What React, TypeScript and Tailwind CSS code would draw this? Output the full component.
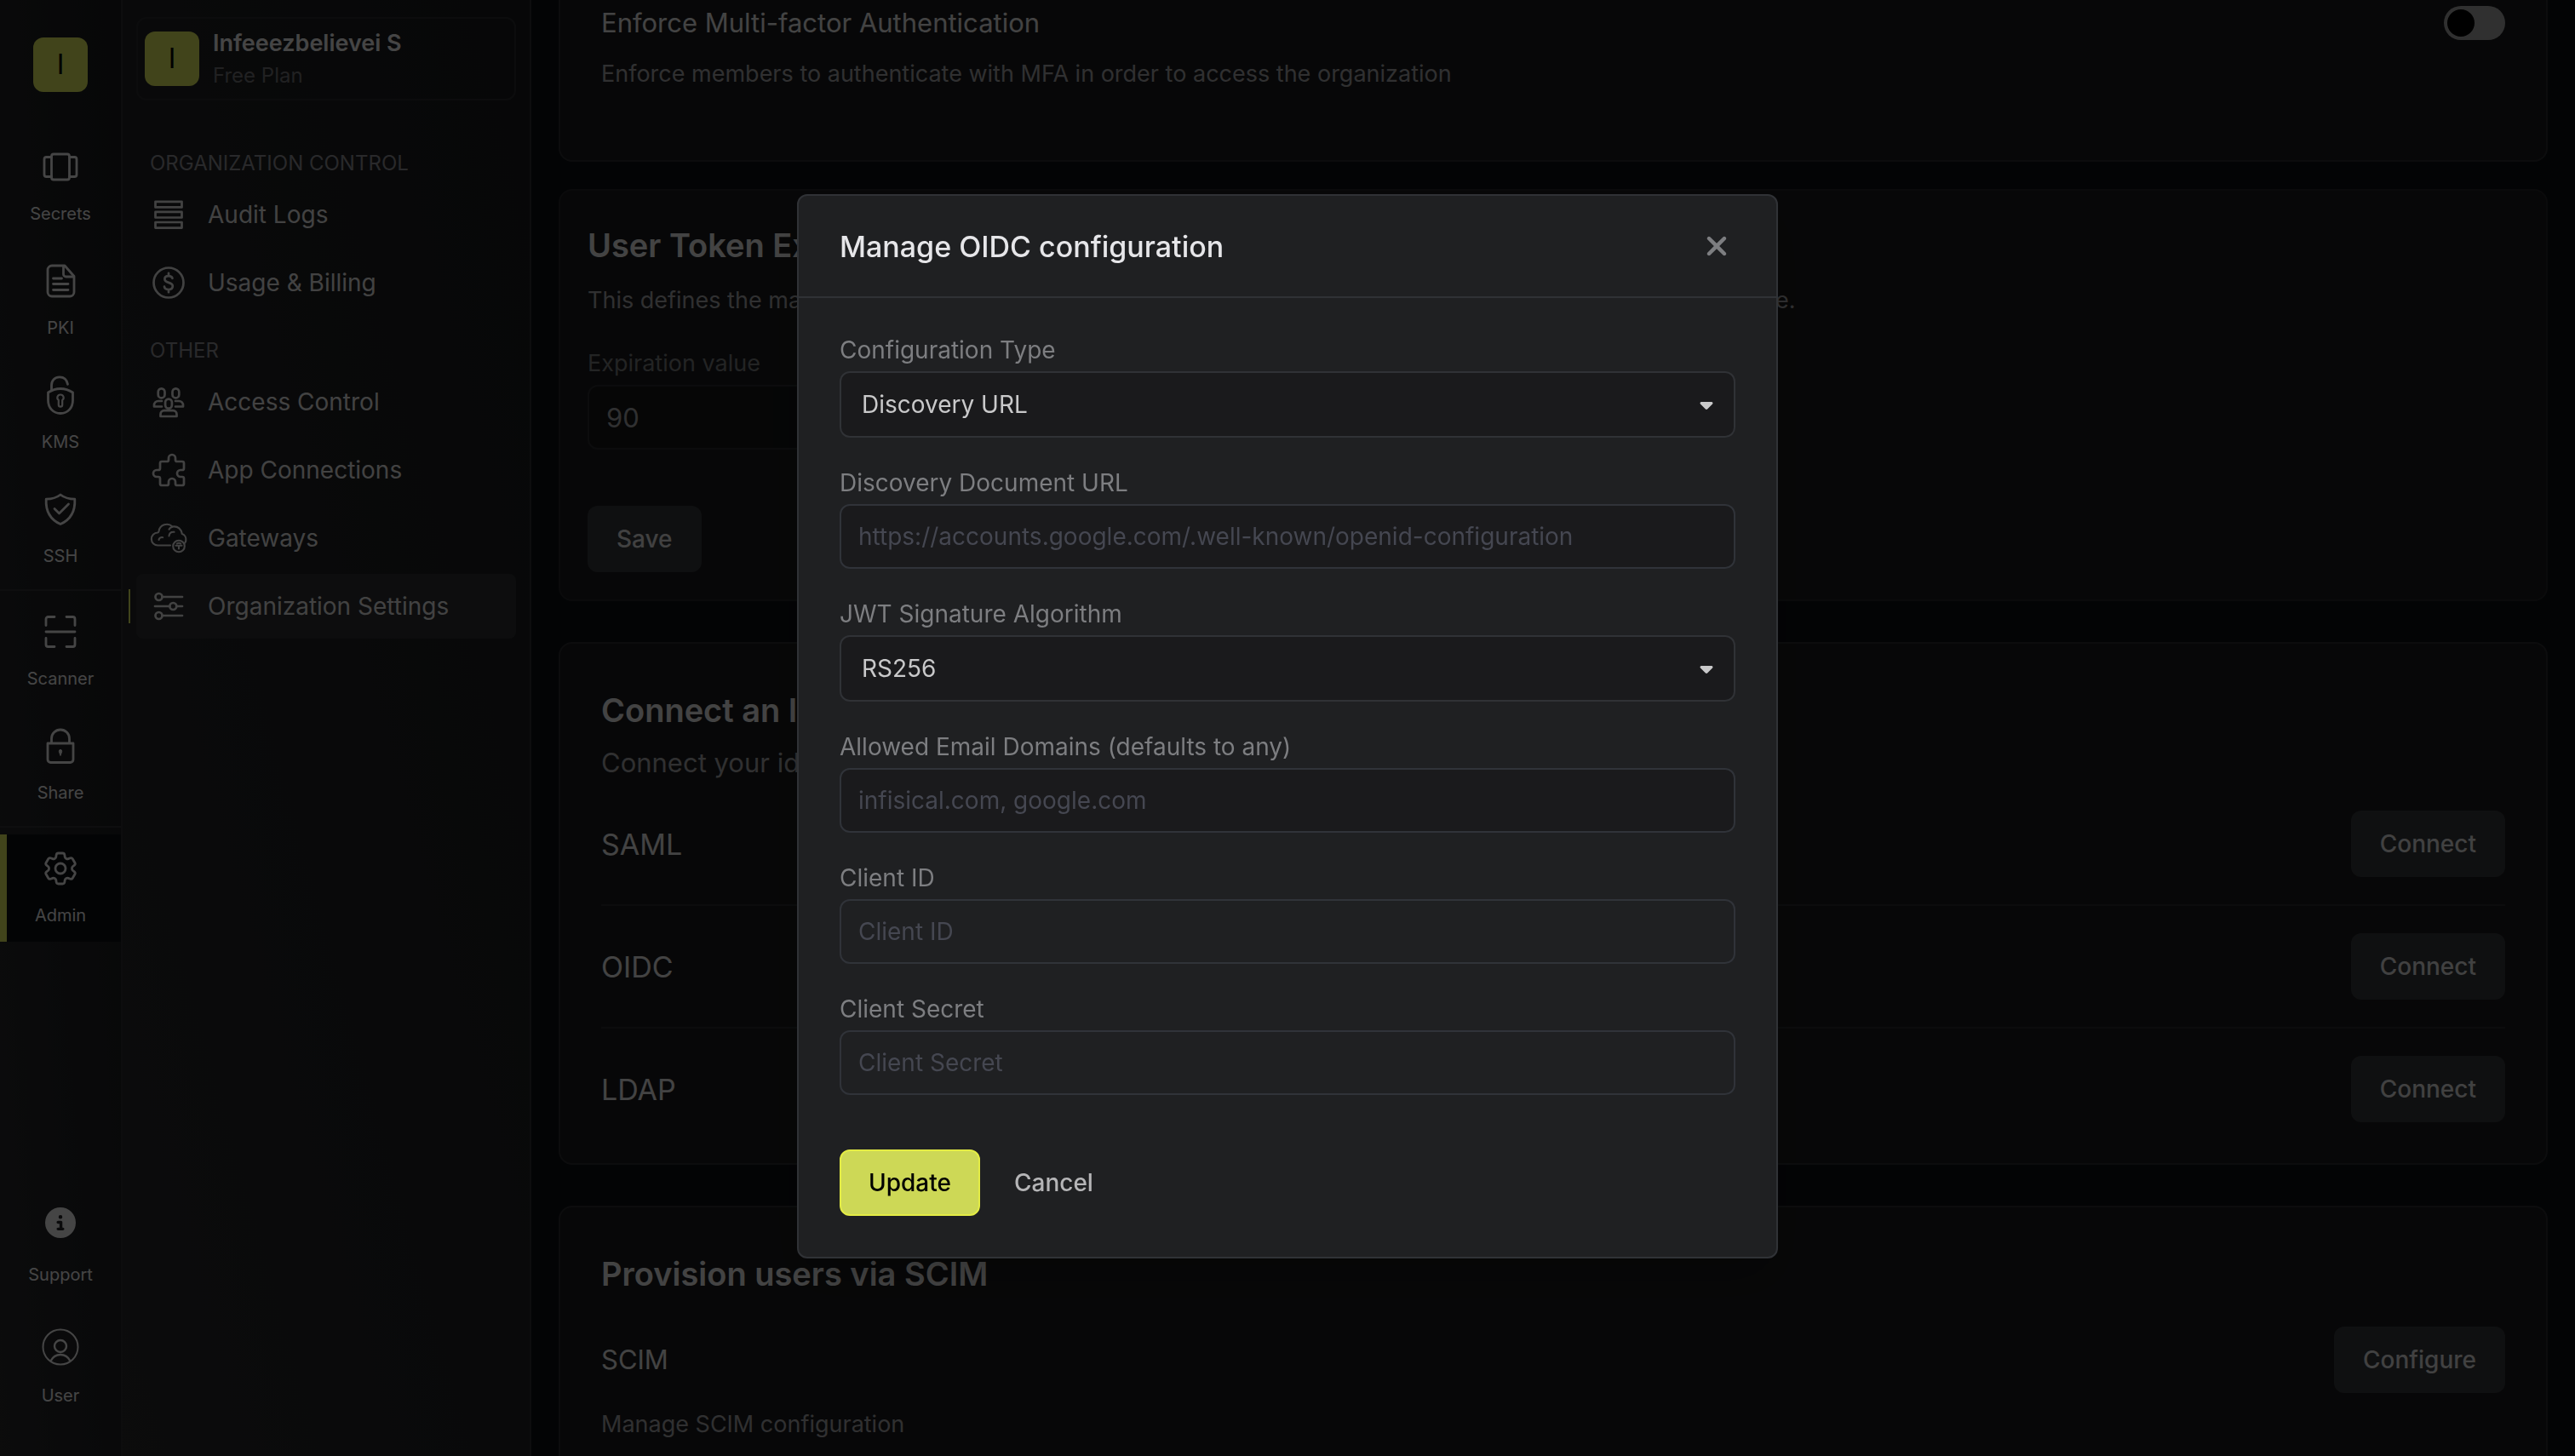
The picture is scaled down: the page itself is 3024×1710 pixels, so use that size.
import React, { useState } from "react";
import { FaCaretDown, FaCircleInfo, FaXmark } from "react-icons/fa6";
import { HiOutlineCog6Tooth } from "react-icons/hi2";

type IconProps = { children: React.ReactNode };

function RailIcon({ children }: IconProps) {
  return (
    <svg
      viewBox="0 0 48 48"
      className="size-12"
      fill="none"
      stroke="currentColor"
      strokeWidth="2.8"
      strokeLinecap="round"
      strokeLinejoin="round"
      aria-hidden="true"
    >
      {children}
    </svg>
  );
}

function MenuIcon({ children }: IconProps) {
  return (
    <svg
      viewBox="0 0 40 40"
      className="size-10 overflow-visible"
      fill="none"
      stroke="currentColor"
      strokeWidth="2.7"
      strokeLinecap="round"
      strokeLinejoin="round"
      aria-hidden="true"
    >
      {children}
    </svg>
  );
}

const products = [
  {
    name: "Secrets",
    icon: (
      <RailIcon>
        <rect x="13.5" y="9" width="21" height="30" rx="2.5" />
        <path d="M13.5 12.5h-6A2.5 2.5 0 0 0 5 15v18a2.5 2.5 0 0 0 2.5 2.5h6M34.5 12.5h6A2.5 2.5 0 0 1 43 15v18a2.5 2.5 0 0 1-2.5 2.5h-6" />
      </RailIcon>
    ),
  },
  {
    name: "PKI",
    icon: (
      <RailIcon>
        <path d="M29 6H14a5 5 0 0 0-5 5v26a5 5 0 0 0 5 5h21a5 5 0 0 0 5-5V18.5z" />
        <path d="M27.5 6.5V16a3 3 0 0 0 3 3h9M15.5 21h10M15.5 27.5H33M15.5 34.5H33" />
      </RailIcon>
    ),
  },
  {
    name: "KMS",
    icon: (
      <RailIcon>
        <path d="M24 16.5c-5 0-10 1.500-14.500 4.500v9c0 9 6 15.500 14.500 15.500S38.500 39 38.500 30v-9C34 18 29 16.500 24 16.500z" />
        <path d="M13.5 18v-5.500c0-6 4-9.700 9.500-9.700 5 0 8.500 3 9.500 8.500" />
        <path d="M24 23.5a3.600 3.600 0 0 0-2.200 6.500v5.500a2.200 2.200 0 0 0 4.400 0V30A3.600 3.600 0 0 0 24 23.500z" strokeWidth="2.2" />
      </RailIcon>
    ),
  },
  {
    name: "SSH",
    icon: (
      <RailIcon>
        <path d="M24 7C19.500 10.500 13 12.200 7.200 12.200 6.500 26 11.500 36 24 41.500 36.500 36 41.500 26 40.800 12.200 35 12.200 28.500 10.500 24 7z" />
        <path d="M17 23.5l5.500 5.500L33.500 18" />
      </RailIcon>
    ),
  },
];

const tools = [
  {
    name: "Scanner",
    icon: (
      <RailIcon>
        <path d="M7 16.500V9a2.500 2.500 0 0 1 2.500-2.500H17M31 6.500h7.500A2.500 2.500 0 0 1 41 9v7.500M41 31.500V39a2.500 2.500 0 0 1-2.500 2.500H31M17 41.500H9.500A2.500 2.500 0 0 1 7 39v-7.500M7 24h34" />
      </RailIcon>
    ),
  },
  {
    name: "Share",
    icon: (
      <RailIcon>
        <path d="M9 21h30v19a3.500 3.500 0 0 1-3.500 3.500h-23A3.500 3.500 0 0 1 9 40zM13.500 21v-5.500a10.500 10.500 0 0 1 21 0V21" />
        <path d="M24 28.500a1.700 1.700 0 0 1 1.700 2L24 35.500l-1.700-5a1.700 1.700 0 0 1 1.700-2z" fill="currentColor" strokeWidth="1" />
      </RailIcon>
    ),
  },
];

const controlMenu = [
  {
    name: "Audit Logs",
    icon: (
      <MenuIcon>
        <path d="M4.500 4.800h31v6.600h-31zM4.500 16.900h31v6.600h-31zM4.500 29h31v6.600h-31z" />
      </MenuIcon>
    ),
  },
  {
    name: "Usage & Billing",
    icon: (
      <MenuIcon>
        <circle cx="20" cy="20" r="17.5" />
        <path d="M24.500 14.800c-.5-1.700-2.200-2.700-4.500-2.700-2.700 0-4.600 1.400-4.600 3.700 0 5.300 9.400 2.900 9.400 8.300 0 2.400-2 3.900-4.800 3.900-2.600 0-4.600-1.200-5-3.300M20 8.800v3M20 28.200v3" />
      </MenuIcon>
    ),
  },
];

const otherMenu = [
  {
    name: "Access Control",
    icon: (
      <MenuIcon>
        <rect x="7.7" y="4.3" width="7.8" height="11" rx="3.9" />
        <rect x="24.5" y="4.3" width="7.8" height="11" rx="3.9" />
        <rect x="16.1" y="16.6" width="7.8" height="11" rx="3.9" />
        <path d="M10.500 37h19v-2.500c0-2.500-1.800-4.300-4.300-4.300H14.800c-2.500 0-4.300 1.800-4.300 4.300z" />
        <path d="M12 19H8c-3 0-5 2-5 5v1.500h9M28 19h4c3 0 5 2 5 5v1.500h-9" />
      </MenuIcon>
    ),
  },
  {
    name: "App Connections",
    icon: (
      <svg
        viewBox="1 1 20 20"
        className="size-10"
        fill="none"
        stroke="currentColor"
        strokeWidth="1.35"
        strokeLinejoin="round"
        aria-hidden="true"
      >
        <path d="M11 4a2 2 0 114 0v1a1 1 0 001 1h3a1 1 0 011 1v3a1 1 0 01-1 1h-1a2 2 0 100 4h1a1 1 0 011 1v3a1 1 0 01-1 1h-3a1 1 0 01-1-1v-1a2 2 0 10-4 0v1a1 1 0 01-1 1H7a1 1 0 01-1-1v-3a1 1 0 00-1-1H4a2 2 0 110-4h1a1 1 0 001-1V7a1 1 0 011-1h3a1 1 0 001-1V4z" />
      </svg>
    ),
  },
  {
    name: "Gateways",
    icon: (
      <MenuIcon>
        <g strokeWidth="2.1">
          <path d="M22 28.500H7.500a7.500 7.500 0 0 1-.3-15 2 2 0 0 0 1.300-1.500 9.500 9.500 0 0 1 16-5.500c6.500-1 10.500 3 11.300 8.500 3.200 1 5 4.500 4.500 8-.2 1.500-.8 2.500-1.800 3.300" />
          <path d="M8.500 22c.3-2 2.300-3.400 4.700-2.800M20.500 17.500c.3-3.200 2.500-5 6-4.700M24.500 6.700c-2 .5-3.300 1.500-4 3" />
          <circle cx="32" cy="29.5" r="6.8" />
          <path d="M28.500 28.800h7M32 28.800v3.700M29.800 26.500c1.400-1 3-1 4.400 0" />
        </g>
      </MenuIcon>
    ),
  },
  {
    name: "Organization Settings",
    active: true,
    icon: (
      <MenuIcon>
        <circle cx="8.5" cy="9" r="4" />
        <circle cx="25.3" cy="20" r="4" />
        <circle cx="8.5" cy="31" r="4" />
        <path d="M12.500 9H36M4 20h17.300M29.300 20H36M12.500 31H36" />
      </MenuIcon>
    ),
  },
];

function RailItem({ name, icon }: { name: string; icon: React.ReactNode }) {
  return (
    <a href="#" className="flex flex-col items-center gap-4 py-4 text-[20px] leading-[30px] text-[#e6e6e6]">
      {icon}
      {name}
    </a>
  );
}

function MenuItem({ name, icon, active }: { name: string; icon: React.ReactNode; active?: boolean }) {
  return (
    <a
      href="#"
      className={`relative flex h-19 items-center gap-6 rounded-lg pl-4 text-[28px] text-[#dedede] ${
        active ? "bg-[#2d2e30]" : ""
      }`}
    >
      {active && <span className="absolute -left-[9px] h-10 w-[2px] bg-[#d9e35a]" />}
      <span className="flex w-11 justify-center">{icon}</span>
      {name}
    </a>
  );
}

function DarkButton({ children }: IconProps) {
  return (
    <button className="h-[78px] rounded-xl bg-[#34373a] px-[34px] text-[28px] font-medium text-[#dadada]">
      {children}
    </button>
  );
}

function FormField({ id, label, children }: { id: string; label: string; children: React.ReactNode }) {
  return (
    <div className="flex flex-col gap-1">
      <label htmlFor={id} className="text-[28px] leading-[42px] text-[#7d7e81]">
        {label}
      </label>
      {children}
    </div>
  );
}

function FormSelect({ id, label, options }: { id: string; label: string; options: string[] }) {
  return (
    <FormField id={id} label={label}>
      <div className="relative flex items-center">
        <select
          id={id}
          className="h-[78px] w-full appearance-none rounded-xl border-2 border-[#303236] bg-[#1a1a1c] px-6 text-[28px] text-[#c9c9ca]"
        >
          {options.map((o) => (
            <option key={o}>{o}</option>
          ))}
        </select>
        <FaCaretDown className="pointer-events-none absolute right-[22px] size-6 text-[#c9c9ca]" />
      </div>
    </FormField>
  );
}

function FormInput({
  id,
  label,
  placeholder,
  plain,
}: {
  id: string;
  label: string;
  placeholder: string;
  plain?: boolean;
}) {
  return (
    <FormField id={id} label={label}>
      <input
        id={id}
        type="text"
        placeholder={placeholder}
        className={`h-19 w-full rounded-xl border-2 border-[#303339] px-5 text-[28px] text-[#c9c9ca] placeholder:text-[#454751] ${
          plain ? "bg-[#1f2022]" : "bg-[#1a1a1c]"
        }`}
      />
    </FormField>
  );
}

export default function App() {
  const [isOpen, setOpen] = useState<boolean>(true);

  return (
    <div className="flex h-screen overflow-hidden bg-[#0c0e13] font-['Inter',sans-serif]">
      <nav className="flex w-36 shrink-0 flex-col border-r-2 border-[#2d2e31] bg-linear-to-tr from-[#28282a] via-[#1f2023] to-[#18191b] pt-11">
        <div className="mb-12 flex size-16 items-center justify-center self-center rounded-xl bg-[#d9e35a] text-[32px] text-black">
          I
        </div>
        <div className="flex flex-col gap-2 pb-2">
          {products.map((p) => (
            <RailItem key={p.name} name={p.name} icon={p.icon} />
          ))}
        </div>
        <div className="flex flex-col gap-2 border-y-2 border-[#303134] py-2">
          {tools.map((t) => (
            <RailItem key={t.name} name={t.name} icon={t.icon} />
          ))}
        </div>
        <div className="relative mt-2 bg-[#0c0e13]">
          <span className="absolute inset-y-0 left-0 w-2 bg-[#d9e35a]" />
          <RailItem name="Admin" icon={<HiOutlineCog6Tooth className="size-12" strokeWidth={1.4} />} />
        </div>
        <div className="mt-auto flex flex-col gap-12 pb-14 text-[20px] leading-[30px] text-[#e6e6e6]">
          <button className="flex flex-col items-center gap-6">
            <span className="flex h-11 items-center">
              <FaCircleInfo className="size-9" />
            </span>
            Support
          </button>
          <button className="flex flex-col items-center gap-5">
            <svg viewBox="0 0 44 44" className="size-11" fill="none" stroke="currentColor" strokeWidth="2" aria-hidden="true">
              <circle cx="22" cy="22" r="20.5" />
              <circle cx="22" cy="21" r="7" strokeWidth="2.4" />
              <path d="M10.500 38.500C13 33.500 17 31 22 31s9 2.500 11.500 7.500" strokeWidth="2.4" />
            </svg>
            User
          </button>
        </div>
      </nav>

      <aside className="w-[480px] shrink-0 border-r-2 border-[#2d2e31] bg-linear-to-tr from-[#28282a] via-[#1f2023] to-[#18191b] px-4 pt-5">
        <button className="flex h-[98px] w-full items-center gap-4 rounded-xl border-2 border-[#2a2b2e] px-2 text-left">
          <span className="flex size-16 items-center justify-center rounded-xl bg-[#d9e35a] text-[32px] text-black">
            I
          </span>
          <span className="flex flex-col">
            <span className="text-[27px] leading-10 font-semibold text-[#e8e8e8]">Infeeezbelievei S</span>
            <span className="text-[24px] leading-9 text-[#707174]">Free Plan</span>
          </span>
        </button>
        <h2 className="mt-14 mb-1 pl-4 text-[24px] leading-9 text-[#8a8b8f]">ORGANIZATION CONTROL</h2>
        <div className="flex flex-col gap-1">
          {controlMenu.map((m) => (
            <MenuItem key={m.name} name={m.name} icon={m.icon} />
          ))}
        </div>
        <h2 className="mt-6 mb-1 pl-4 text-[24px] leading-9 text-[#8a8b8f]">OTHER</h2>
        <div className="flex flex-col gap-1">
          {otherMenu.map((m) => (
            <MenuItem key={m.name} name={m.name} icon={m.icon} active={m.active} />
          ))}
        </div>
      </aside>

      <main className="min-w-0 flex-1 px-8 text-[#e0e0e0]">
        <section className="rounded-b-2xl border-2 border-t-0 border-[#2a2b2e] bg-[#19191b] px-12 pt-1 pb-20">
          <div className="flex h-[46px] items-center justify-between">
            <label htmlFor="mfa" className="text-[31px]">
              Enforce Multi-factor Authentication
            </label>
            <input
              id="mfa"
              type="checkbox"
              role="switch"
              className="h-10 w-18 appearance-none rounded-full bg-[#a0a0a0] p-1 before:block before:size-8 before:rounded-full before:bg-black"
            />
          </div>
          <p className="mt-4 text-[27px] leading-[42px] text-[#a0a1a4]">
            Enforce members to authenticate with MFA in order to access the organization
          </p>
        </section>

        <section className="mt-8 rounded-2xl border-2 border-[#232427] bg-[#19191b] p-8">
          <h2 className="text-[38px] leading-16 font-semibold">User Token Expiration</h2>
          <p className="mt-3 text-[27px] leading-[42px] whitespace-nowrap text-[#a0a1a4]">
            This defines the maximum time a user token will be valid. After this time, each user will need to
            re-authenticate.
          </p>
          <label htmlFor="expiration" className="mt-8 mb-1 block text-[27px] leading-[42px] text-[#77787b]">
            Expiration value
          </label>
          <input
            id="expiration"
            type="text"
            defaultValue="90"
            className="block h-19 w-[640px] rounded-xl border-2 border-[#2a2b2e] bg-[#141517] px-5 text-[31px] text-[#a0a1a4]"
          />
          <div className="mt-[66px] flex">
            <DarkButton>Save</DarkButton>
          </div>
        </section>

        <section className="mt-12 rounded-2xl border-2 border-[#2a2b2e] bg-[#19191b] p-12">
          <h2 className="text-[38px] leading-[60px] font-semibold">Connect an Identity Provider</h2>
          <p className="mt-2 mb-8 text-[31px] leading-12 text-[#a0a1a4]">
            Connect your identity provider to simplify user management
          </p>
          <div className="flex flex-col gap-8 divide-y-2 divide-[#2a2b2e]">
            {["SAML", "OIDC", "LDAP"].map((name) => (
              <div key={name} className="flex items-center justify-between not-last:pb-8">
                <h3 className="text-[34px]">{name}</h3>
                <DarkButton>Connect</DarkButton>
              </div>
            ))}
          </div>
        </section>

        <section className="mt-12 rounded-2xl border-2 border-[#2a2b2e] bg-[#19191b] p-12">
          <h2 className="text-[38px] leading-[60px] font-semibold">Provision users via SCIM</h2>
          <div className="mt-8 flex items-center justify-between">
            <h3 className="text-[31px]">SCIM</h3>
            <DarkButton>Configure</DarkButton>
          </div>
          <p className="mt-4 text-[27px] leading-[42px] text-[#a0a1a4]">Manage SCIM configuration</p>
        </section>
      </main>

      {isOpen && (
        <div className="fixed inset-0 flex items-center justify-center bg-black/70 pb-1">
          <div
            role="dialog"
            aria-labelledby="dialog-title"
            className="w-full max-w-6xl rounded-xl border-2 border-[#303236] bg-[#1f2022] shadow-2xl"
          >
            <div className="flex h-30 items-center justify-between border-b-2 border-[#303236] px-12">
              <h2 id="dialog-title" className="text-[34px] font-medium text-[#e6e6e9]">
                Manage OIDC configuration
              </h2>
              <button aria-label="Close" className="p-1 text-[#7d7e81]" onClick={() => setOpen(false)}>
                <FaXmark className="size-9" />
              </button>
            </div>
            <form className="flex flex-col gap-8 px-12 pt-10 pb-12">
              <FormSelect id="type" label="Configuration Type" options={["Discovery URL", "Custom"]} />
              <FormInput
                id="discovery"
                label="Discovery Document URL"
                placeholder="https://accounts.google.com/.well-known/openid-configuration"
              />
              <FormSelect id="algorithm" label="JWT Signature Algorithm" options={["RS256", "HS256", "RS512"]} />
              <FormInput id="domains" label="Allowed Email Domains (defaults to any)" placeholder="infisical.com, google.com" />
              <FormInput id="client-id" label="Client ID" placeholder="Client ID" plain />
              <FormInput id="client-secret" label="Client Secret" placeholder="Client Secret" plain />
              <div className="mt-8 flex items-center gap-10">
                <button
                  type="submit"
                  className="h-[78px] rounded-xl border-2 border-[#e3ec45] bg-[#cdd856] px-8 text-[28px] font-medium text-black"
                >
                  Update
                </button>
                <button
                  type="button"
                  className="text-[28px] font-medium text-[#b5b5b7]"
                  onClick={() => setOpen(false)}
                >
                  Cancel
                </button>
              </div>
            </form>
          </div>
        </div>
      )}
    </div>
  );
}
